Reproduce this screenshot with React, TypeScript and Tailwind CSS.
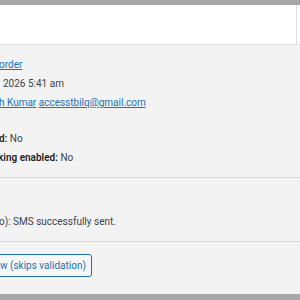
const font = { fontFamily: 'Roboto, "Liberation Sans", sans-serif' }

function Row({ children, className = '' }: { children: React.ReactNode; className?: string }) {
  return <div className={`h-[19px] leading-[19px] whitespace-nowrap ${className}`}>{children}</div>
}

export default function App() {
  return (
    <div className="w-[300px] h-[300px] overflow-hidden bg-[#f3f3f3] text-[10px] text-[#3c434a] flex flex-col" style={font}>
      <div className="h-[5px] bg-[#a7a7a7] shrink-0" />
      <div className="h-[40px] shrink-0 flex border-b border-[#e2e2e2]">
        <div className="w-[297px] bg-white border-r border-[#dcdcde]" />
        <div className="flex-1 bg-white" />
      </div>

      <div className="pt-[10px]">
        <Row className="-ml-[1px]">
          <a className="text-[#2271b1] underline">order</a>
        </Row>
        <Row className="ml-[3px]">2026 5:41 am</Row>
        <Row className="-ml-[1px]">
          <a className="text-[#2271b1] underline">h Kumar</a>{' '}
          <a className="text-[#2271b1] underline">accesstbilq@gmail.com</a>
        </Row>
        <div className="h-[17px]" />
        <Row className="-ml-[1px]">
          <b className="font-semibold text-[#1d2327]">d:</b> No
        </Row>
        <Row className="-ml-[2px]">
          <b className="font-semibold text-[#1d2327]">king enabled:</b> No
        </Row>
      </div>

      <div className="mt-[10px] h-px bg-[#dcdcde]" />
      <div className="h-[34px]" />
      <Row className="-ml-[1px]">o): SMS successfully sent.</Row>
      <div className="mt-[10px] h-px bg-[#dcdcde]" />

      <div className="pt-[12px]">
        <div className="-ml-[10px] w-[102px] h-[23px] border border-[#2271b1] rounded-[3px] bg-[#f6f7f7] text-[#2271b1] leading-[21px] pl-[9px] whitespace-nowrap">
          w (skips validation)
        </div>
      </div>

      <div className="flex-1" />
      <div className="h-[6px] bg-[#a7a7a7] shrink-0" />
    </div>
  )
}
